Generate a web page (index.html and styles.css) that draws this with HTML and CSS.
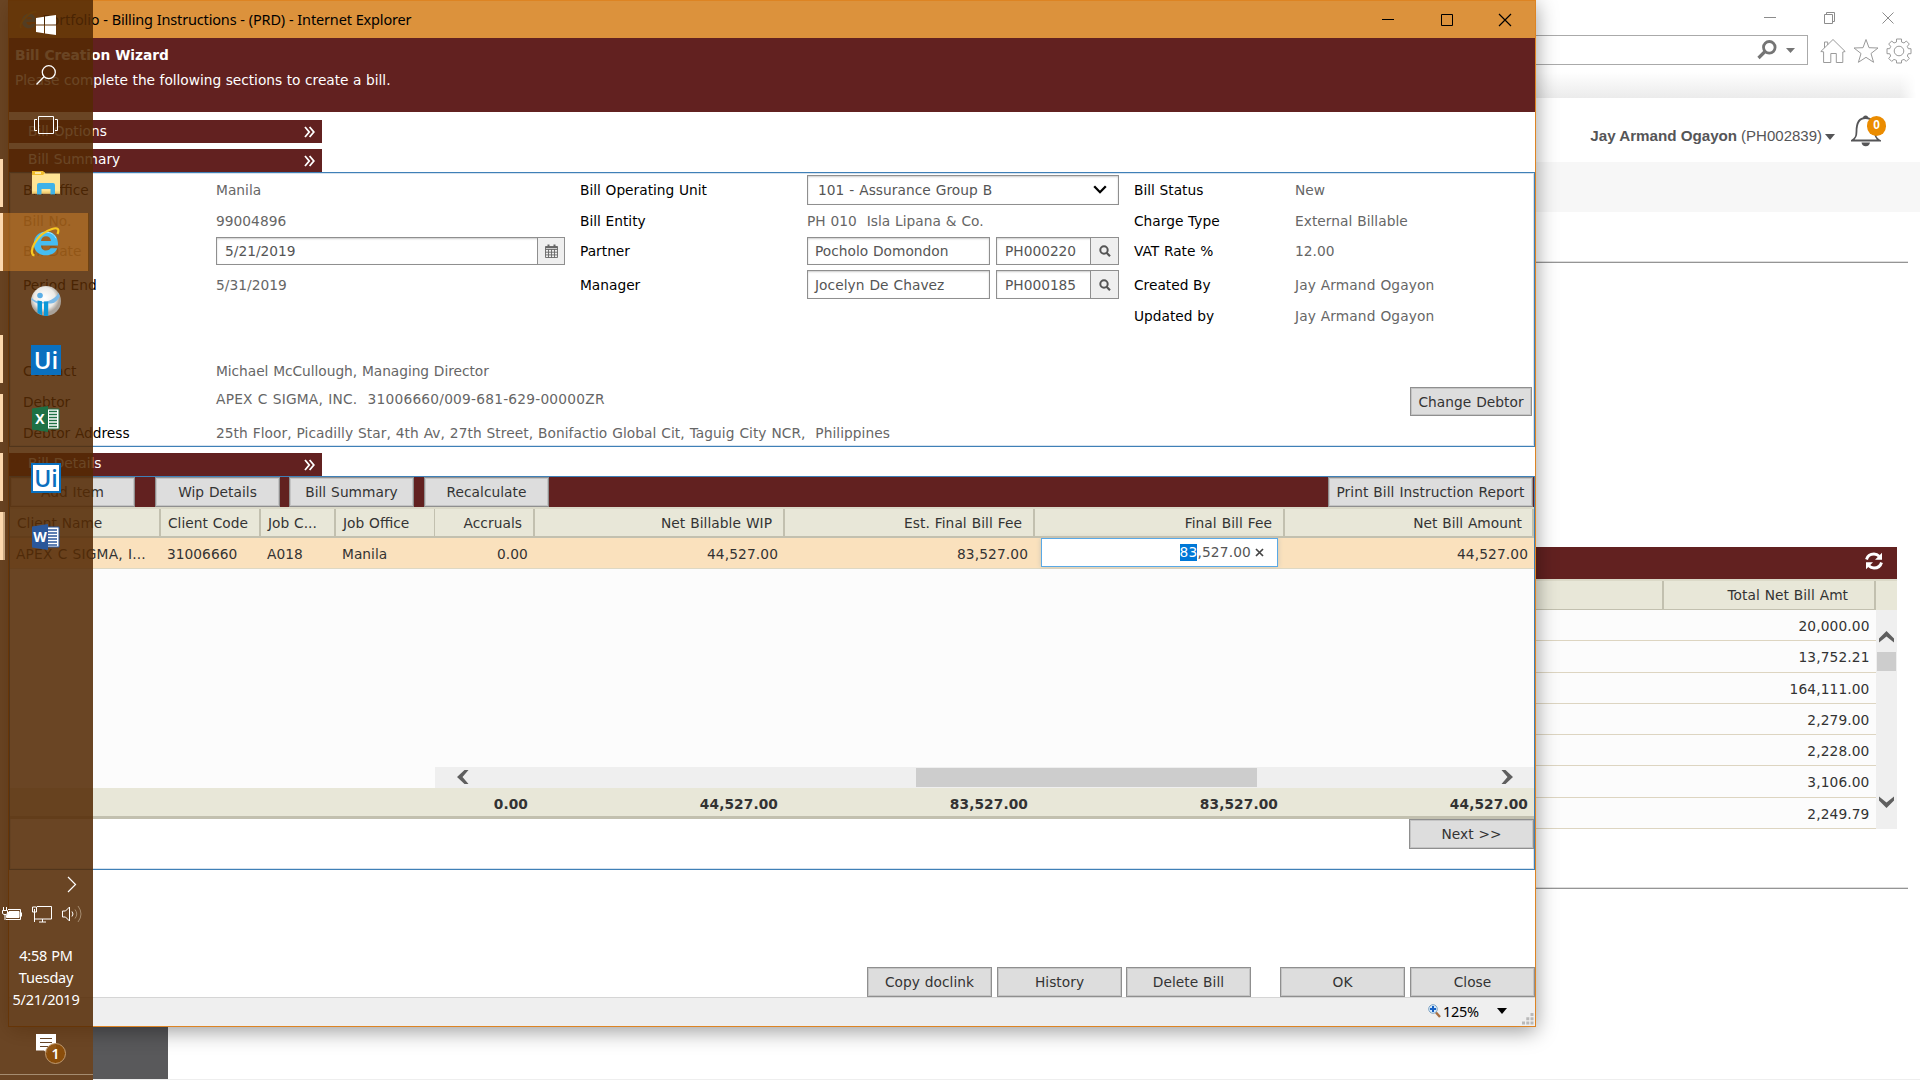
FILE: index.html
```html
<!DOCTYPE html>
<html lang="en">
<head>
<meta charset="utf-8">
<title>Portfolio - Billing Instructions</title>
<link rel="stylesheet" href="styles.css">
</head>
<body>
<svg class="defs" width="0" height="0">
  <symbol id="lens" viewBox="0 0 12 12"><circle cx="5" cy="5" r="3.7" fill="none" stroke="#555" stroke-width="2"/><path d="M7.6 7.8L11 11.2" stroke="#555" stroke-width="2.2"/></symbol>
  <symbol id="dbl" viewBox="0 0 11 12"><path d="M1 1l4.2 5L1 11M5.6 1l4.2 5-4.2 5" fill="none" stroke="#fff" stroke-width="1.8"/></symbol>
</svg>

<!-- Browser window behind the wizard -->
<main class="browser">
  <div class="caption">
    <svg width="17" height="16" viewBox="0 0 17 16"><path d="M2 7.5h12" stroke="#8c8c8c"/></svg>
    <svg width="17" height="16" viewBox="0 0 17 16"><path d="M3.5 4.5h8v9h-8zM5.500 4.500v-2h8v9h-2" fill="none" stroke="#8c8c8c"/></svg>
    <svg width="17" height="16" viewBox="0 0 17 16"><path d="M2.500 2.500l11 11M13.500 2.500l-11 11" stroke="#8c8c8c" fill="none"/></svg>
  </div>
  <div class="toolbar">
    <div class="address">
      <svg width="20" height="20" viewBox="0 0 20 20"><circle cx="12.300" cy="7.300" r="5.800" fill="none" stroke="#757575" stroke-width="2.800"/><path d="M8 11.500L1.500 18" stroke="#757575" stroke-width="3.200"/></svg>
      <svg width="9" height="5" viewBox="0 0 9 5"><path d="M0 0h9L4.500 5z" fill="#757575"/></svg>
    </div>
    <svg class="tool-home" width="26" height="26" viewBox="0 0 26 26" fill="none" stroke="#9a9a9a"><path d="M.8 13.500L13 1.500l12.200 12-2.400.5v10.500h-6.500v-9h-5.500v9H3.600V13.800zM4.500 10V4h3.200v3"/></svg>
    <svg class="tool-star" width="26" height="26" viewBox="0 0 26 26" fill="none" stroke="#9a9a9a"><path d="M13 1.500l3 8.200 9 .3-7 5.500 2.600 8.800L13 19.300l-7.600 5 2.600-8.800L1 10l9-.3z"/></svg>
    <svg class="tool-gear" width="26" height="26" viewBox="0 0 26 26" fill="none" stroke="#9a9a9a"><path d="M10.500 1h5v3l2.500 1 2.300-2 3 3-2 2.400 1 2.300h2.700v5h-2.700l-1 2.300 2 2.400-3 3-2.300-2-2.500 1v2.600h-5v-2.600l-2.500-1-2.300 2-3-3 2-2.400-1-2.300H1v-5h2.700l1-2.300-2-2.400 3-3 2.300 2 2.500-1z"/><circle cx="13" cy="13" r="4.800"/></svg>
  </div>
  <div class="tabband"></div>
  <div class="userbar">
    <b>Jay Armand Ogayon</b><span class="uid">(PH002839)</span>
    <svg class="ucaret" width="10" height="6" viewBox="0 0 10 6"><path d="M0 0h10L5 6z" fill="#555557"/></svg>
    <div class="bell">
      <svg width="30" height="32" viewBox="0 0 30 32"><path d="M1 25.500c3.500-2 4.500-4 4.500-9 0-8 2.500-13.500 9-13.500s9.500 5.500 9.500 13.500c0 5 1 7 4.500 9z" fill="none" stroke="#555557" stroke-width="1.800"/><path d="M12 3a2.600 2.600 0 015.200 0zM10.500 27.500h8.500a4.300 4.300 0 01-8.500 0z" fill="#555557"/></svg>
      <span class="count">0</span>
    </div>
  </div>
  <div class="navband"></div>
  <div class="rule"></div>
  <section class="bills">
    <div class="bills-title"><svg width="18" height="18" viewBox="0 0 18 18"><path d="M1.500 7.500C2.500 3.800 5.500 2 9 2c2 0 3.800.8 5.200 2.200M16.500 10.500C15.500 14.200 12.500 16 9 16c-2 0-3.800-.8-5.200-2.200" fill="none" stroke="#fff" stroke-width="2.900"/><path d="M17 .8v7h-7zM1 17.200v-7h7z" fill="#fff"/></svg></div>
    <div class="bills-head"><div></div><div>Total Net Bill Amt</div><i></i></div>
    <div class="bills-body">
      <div class="bills-rows">
        <div>20,000.00</div><div>13,752.21</div><div>164,111.00</div><div>2,279.00</div><div>2,228.00</div><div>3,106.00</div><div>2,249.79</div>
      </div>
      <div class="vscroll">
        <svg width="15" height="12" viewBox="0 0 15 12"><path d="M0 11.500V7.500L7.500 0 15 7.500v4L7.500 5.500z" fill="#5f5f5f"/></svg>
        <i></i>
        <svg class="down" width="15" height="12" viewBox="0 0 15 12"><path d="M0 .5v4L7.500 12 15 4.500v-4L7.500 6.500z" fill="#5f5f5f"/></svg>
      </div>
    </div>
  </section>
  <div class="rule low"></div>
  <div class="footer"><i></i></div>
</main>

<!-- Bill Creation Wizard window -->
<section class="wizard">
  <header class="titlebar">
    <svg class="ieicon" width="20" height="20" viewBox="0 0 30 30"><path d="M25 18H11c.3 3 2 4.500 4.500 4.500 2 0 3-.6 3.800-2h5.500C23.500 25 20 27.500 15 27.500 9 27.500 4.500 23 4.500 16.500S9 5.500 15.200 5.500C22 5.500 25.500 10.500 25 18zM11 14h8.500c0-2.500-1.800-4-4.200-4S11.400 11.500 11 14z" fill="#4fbfee"/><path d="M3 27C-1 22 12 3 26 2.500" fill="none" stroke="#f1c232" stroke-width="2.500"/></svg>
    <span class="tt">Portfolio - Billing Instructions - (PRD) - Internet Explorer</span>
    <div class="winbtns">
      <svg width="14" height="14" viewBox="0 0 14 14"><path d="M1 6.500h12" stroke="#000"/></svg>
      <svg width="14" height="14" viewBox="0 0 14 14"><path d="M1.500 1.500h11v11h-11z" stroke="#000" fill="none"/></svg>
      <svg width="14" height="14" viewBox="0 0 14 14"><path d="M1 1l12 12M13 1L1 13" stroke="#000" stroke-width="1.200"/></svg>
    </div>
  </header>
  <div class="banner"><h1>Bill Creation Wizard</h1><p>Please complete the following sections to create a bill.</p></div>

  <div class="fold first"><span>Bill Options</span><svg width="11" height="12"><use href="#dbl"/></svg></div>
  <div class="fold second"><span>Bill Summary</span><svg width="11" height="12"><use href="#dbl"/></svg></div>

  <div class="panel summary">
    <div class="row r1"><label>Bill Office</label><span>Manila</span><label>Bill Operating Unit</label>
      <div class="field select">101 - Assurance Group B<svg width="14" height="9" viewBox="0 0 14 9"><path d="M1.200 1.200L7 7.200l5.800-6" fill="none" stroke="#000" stroke-width="2.300"/></svg></div>
      <label>Bill Status</label><span>New</span></div>
    <div class="row r2"><label>Bill No.</label><span>99004896</span><label>Bill Entity</label><span class="entity">PH 010&nbsp; Isla Lipana &amp; Co.</span><label>Charge Type</label><span>External Billable</span></div>
    <div class="row r3"><label>Bill Date</label>
      <div class="field date"><span>5/21/2019</span><i><svg width="13" height="14" viewBox="0 0 13 14"><path d="M.5 2.500h12v11H.5zM.5 5.500h12M.5 8.200h12M.5 10.900h12M3.500 5v8.500M6.500 5v8.500M9.500 5v8.500" fill="none" stroke="#666" stroke-width=".9"/><path d="M.5 2.500h12v1.800H.5zM2.500.5h2v3h-2zM8.500.5h2v3h-2z" fill="#666"/></svg></i></div>
      <label>Partner</label>
      <div class="pair"><div class="field name">Pocholo Domondon</div><div class="field code"><span>PH000220</span><i><svg width="12" height="12"><use href="#lens"/></svg></i></div></div>
      <label>VAT Rate %</label><span>12.00</span></div>
    <div class="row r4"><label>Period End</label><span>5/31/2019</span><label>Manager</label>
      <div class="pair tall"><div class="field name">Jocelyn De Chavez</div><div class="field code"><span>PH000185</span><i><svg width="12" height="12"><use href="#lens"/></svg></i></div></div>
      <label>Created By</label><span class="person">Jay Armand Ogayon</span></div>
    <div class="row r5"><label></label><span></span><label></label><span></span><label>Updated by</label><span class="person">Jay Armand Ogayon</span></div>
    <div class="row wide contact"><label>Contact</label><span>Michael McCullough, Managing Director</span></div>
    <div class="row wide debtor"><label>Debtor</label><span class="up">APEX C SIGMA, INC.&nbsp; 31006660/009-681-629-00000ZR</span><button>Change Debtor</button></div>
    <div class="row wide addr"><label>Debtor Address</label><span>25th Floor, Picadilly Star, 4th Av, 27th Street, Bonifactio Global Cit, Taguig City NCR,&nbsp; Philippines</span></div>
  </div>

  <div class="fold third"><span>Bill Details</span><svg width="11" height="12"><use href="#dbl"/></svg></div>
  <div class="panel details">
    <div class="actions"><button class="a1">Add Item</button><button class="a2">Wip Details</button><button class="a3">Bill Summary</button><button>Recalculate</button><button class="print">Print Bill Instruction Report</button></div>
    <div class="grid ghead"><div>Client Name</div><div>Client Code</div><div>Job C...</div><div>Job Office</div><div class="n">Accruals</div><div class="n">Net Billable WIP</div><div class="n">Est. Final Bill Fee</div><div class="n">Final Bill Fee</div><div class="n">Net Bill Amount</div></div>
    <div class="grid grow"><div class="client">APEX C SIGMA, I...</div><div>31006660</div><div>A018</div><div>Manila</div><div class="n">0.00</div><div class="n">44,527.00</div><div class="n">83,527.00</div>
      <div class="edit"><div><mark>83</mark>,527.00<svg width="9" height="9" viewBox="0 0 9 9"><path d="M1 1l7 7M8 1L1 8" stroke="#444" stroke-width="1.700"/></svg></div></div>
      <div class="n">44,527.00</div></div>
    <div class="gempty"></div>
    <div class="hbar"><div class="hscroll">
      <svg class="l" width="12" height="14" viewBox="0 0 12 14"><path d="M11.500 0H7.500L0 7l7.500 7h4L5.500 7z" fill="#5f5f5f"/></svg>
      <i></i>
      <svg class="r" width="12" height="14" viewBox="0 0 12 14"><path d="M.5 0h4L12 7l-7.500 7h-4l6-7z" fill="#5f5f5f"/></svg>
    </div></div>
    <div class="grid gtotal"><div></div><div></div><div></div><div></div><div class="n">0.00</div><div class="n">44,527.00</div><div class="n">83,527.00</div><div class="n">83,527.00</div><div class="n">44,527.00</div></div>
    <div class="next"><button>Next &gt;&gt;</button></div>
  </div>
  <div class="commands"><button>Copy doclink</button><button>History</button><button>Delete Bill</button><button class="ok">OK</button><button>Close</button></div>
  <footer class="status">
    <svg width="13" height="14" viewBox="0 0 13 14"><path d="M8 8.500l4 4.500" stroke="#a86f42" stroke-width="2.400"/><circle cx="5" cy="5" r="4.300" fill="#d6eafa" stroke="#7fa3c4"/><path d="M5 2v6M2 5h6" stroke="#1560c4" stroke-width="2"/></svg>
    <span>125%</span>
    <svg class="drop" width="10" height="6" viewBox="0 0 10 6"><path d="M0 0h10L5 6z"/></svg>
    <svg class="grip" width="12" height="12" viewBox="0 0 12 12" fill="#b9b9b9"><path d="M8.500 0h3v3h-3zM4.300 4.300h3v3h-3zM8.500 4.300h3v3h-3zM0 8.600h3v3H0zM4.300 8.600h3v3h-3zM8.500 8.600h3v3h-3z"/></svg>
  </footer>
</section>

<!-- Vertical taskbar -->
<nav class="taskbar">
  <div class="tb start"><svg width="20" height="20" viewBox="0 0 20 20" fill="#fff"><path d="M0 3l8-1.200v7.700H0zM9 1.600L20 0v9.500H9zM0 10.500h8v7.700L0 17zM9 10.500h11V20L9 18.400z"/></svg></div>
  <div class="tb"><svg width="20" height="20" viewBox="0 0 20 20" fill="none" stroke="#fff" stroke-width="1.300"><circle cx="12.800" cy="7.200" r="6.500"/><path d="M8 11.800L.5 19.500"/></svg></div>
  <div class="tb view"><svg width="24" height="18" viewBox="0 0 24 18" fill="none" stroke="#fff"><path d="M4.500.5h15v17h-15zM3 3.500H.5v11H3M21 3.500h2.500v11H21"/></svg></div>
  <div class="tb app run explorer"><svg width="28" height="24" viewBox="0 0 28 24"><path d="M0 1h12l1.500 1.500H28V22.500H0z" fill="#ffe494"/><path d="M0 0h11l2 2-2 2H0z" fill="#f0bd2e"/><path d="M3 1.200h6v1.600H3z" fill="#fff2c4"/><path d="M0 20.500h28V22.500H0z" fill="#f2cf73"/><path d="M5 14q0-2 2-2h14q2 0 2 2v9.500h-4.500V18h-9v5.500H5z" fill="#3fb2e8"/></svg></div>
  <div class="tb app run active"><svg width="30" height="30" viewBox="0 0 30 30"><path d="M28 18.500H11c.3 3.600 2.200 5 5 5 2.200 0 3.500-.7 4.500-2.200h6.800c-1.600 4.600-5.800 7-11.500 7-7.200 0-12-4.500-12-11.600S9 4.500 16 4.500c8 0 12.400 5.300 12 14zM11 14h10c-.2-3-2-4.700-5-4.700S11.500 11 11 14z" fill="#45bdf2"/><path d="M9 9.500C11 6.500 13 5.500 16 5.300c5 0 8 2 10 6" fill="none" stroke="#a5e4ff"/><path d="M4.500 28.500C-3 27 6 7 22 2c6-2 7.500.5 5.500 5" fill="none" stroke="#f8c921" stroke-width="2.200"/></svg></div>
  <div class="tb app"><svg width="30" height="30" viewBox="0 0 30 30"><defs><radialGradient id="gl" cx=".45" cy=".4"><stop offset="0" stop-color="#fff"/><stop offset=".7" stop-color="#eceae6"/><stop offset="1" stop-color="#a9a29a"/></radialGradient></defs><circle cx="15" cy="15" r="15" fill="url(#gl)"/><path d="M.5 11.500C5 18 21 18 27.500 7l1.300 3.500C24 18 22 17.500 17 17.500H6.500C3.500 16 1 14.500 .3 13z" fill="#79b9e8"/><path d="M6.500 14.500l4.500.8V29.300L6.500 27zM13 15.500h4.200V30H13z" fill="#0b98d8"/><circle cx="9" cy="9.500" r="2.800" fill="#5aaee6"/></svg></div>
  <div class="tb app run uip"><span>Ui</span></div>
  <div class="tb app run office"><svg width="28" height="26" viewBox="0 0 28 26"><path d="M14 3h13v20H14z" fill="#fff" stroke="#1e7145"/><path d="M17 5.500h8M17 8.500h8M17 11.500h8M17 14.500h8M17 17.500h8M17 20.500h8" stroke="#1e7145" stroke-width="1.300"/><path d="M0 2.500L16 0v26L0 23.500z" fill="#1e7145"/></svg><em>X</em></div>
  <div class="tb app run uip inv"><span>Ui</span></div>
  <div class="tb app run office multi"><svg width="28" height="26" viewBox="0 0 28 26"><path d="M14 3h13v20H14z" fill="#fff" stroke="#2b579a"/><path d="M16 6h9M16 9h9M16 12h9M16 15h9M16 18h9M16 21h9" stroke="#2b579a" stroke-width="1.400"/><path d="M0 2.500L16 0v26L0 23.500z" fill="#2b579a"/></svg><em>W</em></div>
  <div class="tray">
    <svg class="chev" width="10" height="17" viewBox="0 0 10 17"><path d="M1 1l7.500 7.500L1 16" fill="none" stroke="#fff" stroke-width="1.200"/></svg>
    <div class="sys">
      <svg width="20" height="16" viewBox="0 0 20 16" fill="none" stroke="#fff"><path d="M6 3.500h12.500v10H4M19.500 6.500v4M1.500 1v3M4.500 1v3M.5 4.500h5v3l-1.500 1h-2L.5 7.500zM3 8v6"/><path d="M7 5.500h10v6H4.500V9.500z" fill="#fff"/></svg>
      <svg width="20" height="17" viewBox="0 0 20 17" fill="none" stroke="#fff"><path d="M5 .5h14.500v12.500H3M10.500 13v3M7 16h7M.5 1h4v5h-4zM2.500 3v13"/></svg>
      <svg width="21" height="18" viewBox="0 0 21 18" fill="none" stroke="#fff"><path d="M.5 6h3l4-4v14l-4-4h-3zM10 6.500q2 2.500 0 5"/><path d="M13 4.500q3.500 4.500 0 9M16 1q6 8 0 16" stroke="#a58c70"/></svg>
    </div>
    <div class="clock"><span>4:58 PM</span><span>Tuesday</span><span>5/21/2019</span></div>
    <div class="notes"><svg width="20" height="20" viewBox="0 0 20 20"><path d="M0 0h20v16.500h-8V20l-4-3.500H0z" fill="#fff"/><path d="M4 4.500h12M4 8.500h12M4 12.500h8" stroke="#664526"/></svg><b>1</b></div>
    <div class="desk"></div>
  </div>
</nav>
</body>
</html>
```
FILE: styles.css
```css
* { box-sizing: border-box; }
body { margin: 0; width: 1920px; height: 1080px; position: relative; overflow: hidden; background: #fff; font: 13.75px/18px "DejaVu Sans", Verdana, sans-serif; word-spacing: .5px; letter-spacing: .03px; color: #333; }
svg { display: block; flex: none; }
.defs { position: absolute; }
button { font: inherit; letter-spacing: inherit; word-spacing: inherit; color: #333; background: #ddd; border: 1px solid #8f8f8f; box-shadow: inset 0 0 0 1px #c4c4c4; width: 125px; height: 30px; padding: 0; white-space: nowrap; }

/* background browser */
.browser { position: absolute; inset: 0 0 0 93px; display: flex; flex-direction: column; }
.caption { height: 35px; display: flex; justify-content: flex-end; gap: 42px; padding: 10px 23px 0 0; }
.toolbar { height: 30px; display: flex; }
.address { width: 1715px; height: 30px; border: 1px solid #aaa; display: flex; align-items: center; justify-content: flex-end; padding-right: 12px; gap: 9px; }
.tool-home { margin: 3px 0 0 12px; }
.tool-star, .tool-gear { margin: 3px 0 0 7px; }
.tabband { height: 26px; margin: 7px 4px 0 0; background: linear-gradient(#fff, #ebebeb); -webkit-mask: linear-gradient(90deg, #000 1807px, transparent); mask: linear-gradient(90deg, #000 1807px, transparent); }
.userbar { height: 64px; display: flex; padding: 14px 33px 0 0; justify-content: flex-end; font: 15px/48px "Liberation Sans", Arial, sans-serif; letter-spacing: 0; word-spacing: 0; color: #555557; }
.userbar b { letter-spacing: -.02px; font-size: 15.200px; }
.uid { margin-left: 4px; letter-spacing: 0; }
.ucaret { margin: 22px 16px 0 3px; }
.bell { position: relative; width: 36px; padding-top: 3px; }
.count { position: absolute; left: 16px; top: 4px; width: 19px; height: 20px; border-radius: 10px; background: #eb8c00; color: #fff; font: bold 12px/18px "Liberation Sans", Arial, sans-serif; text-align: center; }
.navband { height: 50px; background: #f7f7f7; }
.rule { width: 1815px; height: 1px; margin-top: 50px; background: #959595; box-shadow: 0 -1px #dedede; flex: none; }
.bills { width: 1804px; margin-top: 284px; }
.bills-title { height: 32px; background: #622120; display: flex; justify-content: flex-end; padding: 5px 14px 0 0; }
.bills-head { display: grid; grid-template-columns: 1571px 212px 21px; height: 31px; background: #e8e7d8; border-top: 2px solid #dbd9c8; line-height: 28px; }
.bills-head div { border-right: 2px solid #c2c0af; border-bottom: 3px solid #c2c0af; text-align: right; padding-right: 26px; }
.bills-body { display: flex; height: 219px; }
.bills-rows { width: 1783px; display: flex; flex-direction: column; background: #fcfcfc; }
.bills-rows div { flex: 1; border-bottom: 1px solid #ddd5c1; text-align: right; padding-right: 6.500px; letter-spacing: .12px; line-height: 33px; min-height: 0; }
.vscroll { width: 21px; background: #efefef; display: flex; flex-direction: column; align-items: center; padding-top: 21px; }
.vscroll i { width: 19px; height: 19px; background: #cdcdcd; margin-top: 9px; }
.vscroll .down { margin-top: 125px; }
.rule.low { margin-top: 59px; }
.footer { margin-top: auto; height: 53px; border-bottom: 1px solid #eee; }
.footer i { display: block; width: 75px; height: 52px; background: #59595b; }

/* wizard window */
.wizard { position: absolute; left: 8px; top: 0; width: 1528px; height: 1027px; border: 1px solid #dd8423; background: #fff; box-shadow: 0 4px 20px rgba(0,0,0,.4); display: flex; flex-direction: column; }
.titlebar { height: 37px; flex: none; background: #dc923c; display: flex; align-items: center; padding: 0 23px 0 10px; color: #000; font: 14.500px/36px "Noto Sans", "Open Sans", sans-serif; word-spacing: .3px; }
.tt { margin: -2px 0 0 3px; letter-spacing: -.16px; }
.winbtns { margin: 0 0 0 auto; display: flex; gap: 44.500px; }
.banner { height: 74px; flex: none; background: #622120; color: #fff; padding: 8px 6px; letter-spacing: -.04px; word-spacing: .3px; }
.banner h1 { font-size: 13.75px; line-height: 18px; margin: 0; }
.banner p { margin: 7px 0 0; }
.fold { flex: none; width: 313px; height: 23px; background: #622120; color: #fff; display: flex; justify-content: space-between; padding: 0 7px 0 19px; line-height: 22px; letter-spacing: 0; }
.fold svg { margin-top: 6px; }
.fold.first { margin-top: 8px; }
.fold.second { margin-top: 6px; line-height: 20px; }
.fold.third { margin-top: 6px; line-height: 20px; }
.panel { flex: none; width: 1526px; border: 1px solid #3f80b7; box-shadow: inset 0 0 0 1px #d6e2ee; }
.summary { height: 275px; }
.row { display: grid; grid-template-columns: 193px 364px 227px 327px 161px 1fr; padding-left: 13px; align-items: center; color: #666; white-space: nowrap; }
.row label { color: #000; letter-spacing: 0; word-spacing: .3px; }
.r1 { height: 33px; }
.r2 { height: 30px; }
.r3 { height: 31px; padding-bottom: 2px; }
.r4 { height: 35px; }
.r5 { height: 29px; padding-bottom: 2px; margin-bottom: 25px; }
.row.wide { grid-template-columns: 193px 1fr 122px; padding-right: 2px; }
.contact { height: 30px; letter-spacing: -.04px; }
.debtor { height: 31px; }
.debtor .up { margin-top: -5px; letter-spacing: .22px; }
.debtor button { width: 122px; height: 29px; }
.addr { height: 32px; letter-spacing: .05px; }
.person { letter-spacing: .09px; }
.entity { letter-spacing: .02px; }
.field { height: 29px; border: 1px solid #8f8f8f; box-shadow: inset 0 1px 2px #ccc; background: #fff; color: #555; display: flex; align-items: center; justify-content: space-between; padding-left: 8px; letter-spacing: 0; }
.field i { width: 28px; height: 100%; background: #efefef; border-left: 1px solid #8f8f8f; display: flex; align-items: center; justify-content: center; }
.select { width: 312px; height: 30px; padding: 0 11px 0 10px; letter-spacing: .04px; }
.date { width: 349px; height: 28px; }
.date i { width: 27px; }
.pair { display: flex; gap: 6px; }
.name { width: 183px; height: 28px; padding-left: 7px; }
.code { width: 123px; height: 28px; }
.tall .field { height: 29px; }
.tall .name { letter-spacing: .05px; }
.details { height: 394px; display: flex; flex-direction: column; }
.actions { height: 30px; background: #622120; display: flex; padding-right: 1px; }
.a1 { margin-right: 20px; }
.a2 { margin-right: 9px; }
.a3 { margin-right: 10px; }
.print { margin-left: auto; width: 205px; letter-spacing: .06px; }
.grid { display: grid; grid-template-columns: 151px 100px 75px 99px 100px 250px 250px 250px 249px; white-space: nowrap; }
.grid .n { text-align: right; }
.ghead { height: 31px; background: #e8e7d8; border-top: 2px solid #dbd9c8; border-bottom: 2px solid #c2c0af; line-height: 28px; letter-spacing: 0; }
.ghead div { border-right: 2px solid #c2c0af; padding: 0 11px 0 7px; }
.ghead .n { letter-spacing: .06px; }
.ghead div:last-child { padding-right: 10px; letter-spacing: 0; }
.ghead div:nth-child(4) { border-right-width: 1px; }
.grow { height: 31px; background: #fae1bd; border-bottom: 1px solid #ddd8c4; line-height: 32px; }
.grow > div { padding: 0 5px 0 6px; }
.grow > .n { padding-right: 7px; letter-spacing: .12px; }
.grow > .n:last-child { padding-right: 6px; }
.client { letter-spacing: .2px; }
.grow > .edit { padding: 0 7px 2px 6px; }
.edit div { height: 29px; border: 1px solid #5aa9e6; background: #fff; box-shadow: 0 0 5px #c9c5b4; color: #555; line-height: 27px; display: flex; justify-content: flex-end; align-items: center; padding-right: 13px; letter-spacing: .16px; }
.edit svg { margin-left: 4px; }
mark { background: #0078d7; color: #fff; line-height: 17px; }
.gempty { height: 198px; background: #fcfcfc; }
.hbar { background: #fcfcfc; padding-left: 425px; }
.hscroll { height: 21px; background: #efefef; display: flex; align-items: center; padding: 0 21px 0 22px; }
.hscroll svg { margin-top: -2px; }
.hscroll i { width: 341px; height: 19px; background: #cdcdcd; margin-left: 447px; }
.hscroll .r { margin-left: auto; }
.gtotal { height: 31px; background: #e8e7d8; border-bottom: 3px solid #c2c0af; font-weight: bold; line-height: 32px; }
.gtotal .n { padding-right: 7px; letter-spacing: .08px; }
.gtotal .n:last-child { padding-right: 6px; }
.next { display: flex; justify-content: flex-end; }
.commands { flex: none; margin-top: 97px; display: flex; justify-content: flex-end; gap: 5px; }
.ok { margin-left: 24px; }
.commands button:nth-child(2) { margin-right: -1px; }
.commands button:nth-child(1) { margin-right: 0; }
.status { height: 29px; border-top: 1px solid #d5d5d5; background: #efefef; display: flex; align-items: center; padding: 0 1px 2px 1419px; color: #000; font: 14.500px/26px "Noto Sans", "Open Sans", sans-serif; }
.status span { margin-left: 2px; letter-spacing: -.3px; }
.drop { margin-left: 18px; }
.grip { margin: 15px 0 0 auto; }

/* taskbar */
.taskbar { position: absolute; left: 0; top: 0; width: 93px; height: 1080px; background: rgba(84,41,4,.87); color: #fff; display: flex; flex-direction: column; }
.tb { height: 50px; display: flex; align-items: center; justify-content: center; position: relative; flex: none; padding-right: 1px; }
.view { margin-bottom: 4px; }
.app { height: 59px; }
.run { border-left: 3px solid #fdd9ae; padding-right: 4px; margin: 5px 0 6px; height: 48px; }
.explorer svg { margin-top: -1px; }
.active { height: 58px; margin: 0; width: 89px; padding: 0 2px 1px 0; background: rgba(205,127,40,.55); border-right: 1px solid #6f4312; }
.uip { padding-top: 1px; }
.uip span { width: 30px; height: 30px; background: #0a70bf; color: #fff; font: 600 24px/30px "Open Sans", sans-serif; letter-spacing: 0; text-align: center; }
.uip.inv span { background: #fff; color: #0a70bf; border: 2px solid #0a70bf; line-height: 26px; font-size: 23px; }
.office { padding-top: 2px; }
.tb em { position: absolute; left: 30px; width: 14px; text-align: center; color: #fff; font: bold 14px/16px "Open Sans", sans-serif; }
.multi { box-shadow: inset 2px 0 #c9a882; }
.tray { margin-top: auto; height: 204px; display: flex; flex-direction: column; }
.chev { margin-left: 67px; }
.sys { display: flex; gap: 10px; padding-left: 2px; margin-top: 12px; align-items: center; }
.clock { margin-top: 21px; padding-right: 1px; font: 14.500px/22px "Noto Sans", sans-serif; letter-spacing: -.2px; display: flex; flex-direction: column; align-items: center; }
.notes { position: relative; margin: 24px 0 0 36px; }
.notes b { position: absolute; left: 9px; top: 9px; width: 21px; height: 21px; border: 1px solid #c09a70; border-radius: 50%; background: rgba(140,78,10,.95); font: 600 14px/19px "Noto Sans", sans-serif; text-align: center; }
.desk { margin-top: auto; height: 6px; border-top: 1px solid #a58c70; }
```
